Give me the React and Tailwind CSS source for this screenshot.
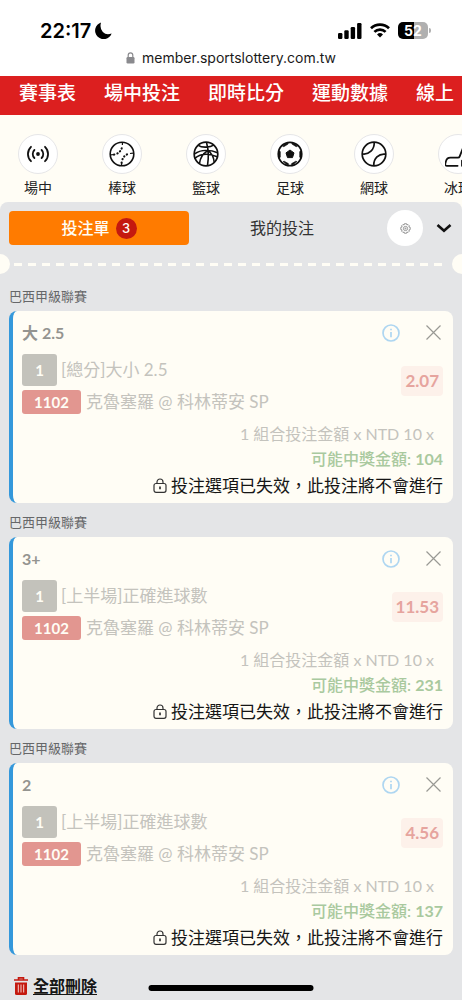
import React, { useState } from "react";

const NAV = ["賽事表", "場中投注", "即時比分", "運動數據", "線上"];

const BETS = [
  { id: "a", pick: "大 2.5", market: "[總分]大小 2.5", odds: "2.07", win: 104 },
  { id: "b", pick: "3+", market: "[上半場]正確進球數", odds: "11.53", win: 231 },
  { id: "c", pick: "2", market: "[上半場]正確進球數", odds: "4.56", win: 137 },
];

function LiveIcon() {
  return (
    <svg viewBox="0 0 26 26" className="size-[26px]" fill="none" stroke="#111" strokeWidth="1.8" strokeLinecap="round" aria-hidden="true">
      <circle cx="13" cy="13" r="1.9" fill="#111" stroke="none" />
      <path d="M9.400 9a5.600 5.600 0 0 0 0 8M16.600 9a5.600 5.600 0 0 1 0 8M6 5.800a10 10 0 0 0 0 14.400M20 5.800a10 10 0 0 1 0 14.400" />
    </svg>
  );
}

function BaseballIcon() {
  return (
    <svg viewBox="0 0 26 26" className="size-[26px]" fill="none" stroke="#111" aria-hidden="true">
      <circle cx="13" cy="13" r="11.8" strokeWidth="1.6" />
      <path d="M5 13.600Q12.500 12 13.400 4.200M12.600 21.800Q13.500 14 21 12.400" strokeWidth="2.100" strokeLinecap="round" strokeDasharray="0.300 3.100" />
      <path d="M2 13.800l3-.3M21 12.500l3-.3M13.400 4V1.500M12.600 22v2.500" strokeWidth="1.200" />
    </svg>
  );
}

function BasketballIcon() {
  return (
    <svg viewBox="0 0 26 26" className="size-[26px]" fill="none" stroke="#111" strokeWidth="1.6" aria-hidden="true">
      <circle cx="13" cy="13" r="11.8" strokeWidth="1.7" />
      <path d="M13.500 1.400c2.200 7.500 2.200 15.500 1 23.200M1.600 12.800C8 8.600 17 8.600 24.600 11.800M5.400 4.400c3.500 2.600 11.500 2.200 15.700-.6M1.600 17.600c5.600-4.800 14-5.400 22.600-1.800M15 9.600c-5 2.800-8 7.600-8.600 13.200M15.200 9.600c3.400 2.600 5.600 6.500 6 11.600" />
    </svg>
  );
}

function SoccerIcon() {
  return (
    <svg viewBox="0 0 26 26" className="size-[26px]" fill="none" stroke="#111" aria-hidden="true">
      <circle cx="13" cy="13" r="11.7" strokeWidth="1.8" />
      <path d="M13 9l4 2.900-1.500 4.700h-5L9 11.900z" fill="#111" strokeWidth="1" strokeLinejoin="round" />
      <path
        d="M5.600 5.200l2.600-2.400 2.600-.8.400 1-4.400 2.700zM20.400 5.200l-2.600-2.400-2.600-.8-.4 1 4.400 2.700zM1.600 9.400l1.700 1.200v5.600l-1.500 1.200zM24.400 9.400l-1.700 1.200v5.600l1.500 1.200zM6 20.600l1.200-.4 4.200 2.400v2.200zM20 20.600l-1.200-.4-4.200 2.400v2.200z"
        fill="#111"
        strokeWidth=".6"
        strokeLinejoin="round"
      />
    </svg>
  );
}

function TennisIcon() {
  return (
    <svg viewBox="0 0 26 26" className="size-[26px]" fill="none" stroke="#111" strokeWidth="1.7" aria-hidden="true">
      <circle cx="13" cy="13" r="11.8" />
      <path d="M1.600 13C8 13.800 13.600 8.600 13.200 1.400M12.800 24.600c-.4-7 5-12.200 11.600-11.400" />
    </svg>
  );
}

function HockeyIcon() {
  return (
    <svg viewBox="0 0 26 26" className="size-[26px]" fill="none" stroke="#111" strokeWidth="1.8" strokeLinejoin="round" strokeLinecap="round" aria-hidden="true">
      <path d="M18 7l-3.400 8.600q-.4 1-1.600 1H5.400Q1.800 16.600.9 20.400L.3 22.600q-.4 2.200 1.600 2.200H12.600" />
      <path d="M17 19.600h9v5.200h-9z" fill="#111" />
    </svg>
  );
}

const SPORTS = [
  ["場中", LiveIcon],
  ["棒球", BaseballIcon],
  ["籃球", BasketballIcon],
  ["足球", SoccerIcon],
  ["網球", TennisIcon],
  ["冰球", HockeyIcon],
];

function StatusBar() {
  return (
    <div className="bg-white font-['Inter',sans-serif] text-black">
      <div className="flex h-[46px] items-end justify-between pr-[31px] pl-10">
        <div className="flex h-[31px] items-center gap-1">
          <span className="text-[20px] leading-6 font-semibold">22:17</span>
          <svg viewBox="0 0 18 18" className="size-[17px]" aria-hidden="true">
            <path d="M6.400.6A9 9 0 1 0 17.600 12.200Q12 14.400 8.300 10.600 4.600 6.400 6.400.6z" />
          </svg>
        </div>
        <div className="flex h-[31px] items-center gap-2">
          <svg viewBox="0 0 24 16" className="h-4 w-6" aria-hidden="true">
            <rect x="0" y="10" width="4.400" height="6" rx="1.200" />
            <rect x="6.300" y="7.200" width="4.400" height="8.800" rx="1.200" />
            <rect x="12.700" y="4" width="4.400" height="12" rx="1.200" />
            <rect x="19.100" y="0" width="4.400" height="16" rx="1.200" />
          </svg>
          <svg viewBox="0 0 20 15" className="h-[15px] w-5" fill="none" stroke="#000" strokeWidth="2.700" aria-hidden="true">
            <path d="M1 5.200a13 13 0 0 1 18 0M4.400 8.900a8 8 0 0 1 11.200 0" />
            <path d="M10 14.600l-3-3.200a4.300 4.300 0 0 1 6 0z" fill="#000" stroke="none" />
          </svg>
          <div className="flex items-center gap-px">
            <div className="flex h-[17px] w-[30px] items-center justify-center rounded-[5px] bg-linear-to-r from-black from-52% to-[#b0b0b0] to-52% text-[14px] leading-4 font-bold text-white">
              52
            </div>
            <span className="h-[5px] w-0.5 rounded-r bg-[#b0b0b0]" />
          </div>
        </div>
      </div>
      <div className="flex h-[30px] items-center justify-center gap-[7px] pb-1.5">
        <svg viewBox="0 0 9 12" className="h-3 w-[9px]" aria-hidden="true">
          <rect x="0.500" y="5" width="8" height="6.500" rx="1.200" fill="#8a8a8e" />
          <path d="M2.200 5.500V3.200a2.300 2.300 0 0 1 4.600 0v2.300" fill="none" stroke="#8a8a8e" strokeWidth="1.200" />
        </svg>
        <span className="text-[14px] leading-5 text-[#1a1a1a]">member.sportslottery.com.tw</span>
      </div>
    </div>
  );
}

function BetCard({ bet, onRemove }) {
  return (
    <section>
      <h2 className="flex h-[34px] items-center pt-1 text-[13px] leading-5 text-[#666769]">巴西甲級聯賽</h2>
      <article className="flex h-[192px] flex-col rounded-lg border-l-4 border-[#3498db] bg-[#fffdf5] pr-2.5 pl-[9px]">
        <div className="flex h-[43px] items-center justify-between">
          <h3 className="text-[16px] leading-6 font-bold text-[#949490]">{bet.pick}</h3>
          <div className="flex items-center gap-[26px]">
            <button type="button" aria-label="資訊">
              <svg viewBox="0 0 18 18" className="size-[18px]" fill="none" stroke="#aed6f1" strokeWidth="1.700" aria-hidden="true">
                <circle cx="9" cy="9" r="8" />
                <path d="M9 8v5.200M9 4.700v1.500" />
              </svg>
            </button>
            <button type="button" aria-label="移除" onClick={onRemove} className="pr-0.5">
              <svg viewBox="0 0 15 15" className="size-[15px]" fill="none" stroke="#999994" strokeWidth="1.200" aria-hidden="true">
                <path d="M.5.5l14 14M14.500.5l-14 14" />
              </svg>
            </button>
          </div>
        </div>
        <div className="flex items-start justify-between text-[16px] leading-6 text-[#c4c3bd]">
          <div className="flex flex-col gap-1">
            <div className="flex items-center gap-1">
              <span className="flex h-8 w-[35px] items-center justify-center rounded-[3px] bg-[#c3c2bb] text-[15px] font-bold text-[#fffdf5]">1</span>
              <span className="text-[17px]">{bet.market}</span>
            </div>
            <div className="flex items-center gap-[5px]">
              <span className="flex h-6 w-[59px] items-center justify-center rounded-[3px] bg-[#e29690] text-[15px] font-bold text-[#fffdf5]">1102</span>
              <span className="text-[17px]">克魯塞羅 @ 科林蒂安 SP</span>
            </div>
          </div>
          <span className="mt-3 flex h-[30px] items-center rounded bg-[#fdf1ea] px-1 text-[17px] font-bold text-[#e6a49e]">{bet.odds}</span>
        </div>
        <div className="mt-[7px] flex flex-col items-end text-[16px] leading-6">
          <p className="pr-[9px] leading-[26px] text-[#c4c3bd]">1 組合投注金額 x NTD 10 x</p>
          <p className="font-medium text-[#a9c99e]">
            可能中獎金額: <strong className="font-bold">{bet.win}</strong>
          </p>
          <p className="flex items-center gap-1 pt-[3px] text-[17px] text-[#151515]">
            <svg viewBox="0 0 14 16" className="h-4 w-[14px]" fill="none" stroke="#333" strokeWidth="1.200" aria-hidden="true">
              <rect x="1" y="5.500" width="12" height="8.800" rx="2" />
              <path d="M4 5.500V4a3 3 0 0 1 6 0v1.500" />
              <path d="M7 8.600v2.600" strokeWidth="1.700" />
            </svg>
            投注選項已失效，此投注將不會進行
          </p>
        </div>
      </article>
    </section>
  );
}

export default function App() {
  const [bets, setBets] = useState(BETS);
  return (
    <div className="relative min-h-screen w-full overflow-hidden bg-[#fffdf5] font-['Lato','Noto_Sans_CJK_TC',sans-serif]">
      <StatusBar />
      <nav className="flex h-[39px] items-center gap-7 overflow-hidden bg-[#dc1f1f] pb-1.5 pl-[19px] text-[19px] leading-7 font-medium whitespace-nowrap text-white">
        {NAV.map((n) => (
          <a key={n} href="#" className="shrink-0">{n}</a>
        ))}
      </nav>
      <div className="flex h-[87px] gap-11 overflow-hidden pt-[19px] pl-[18px]">
        {SPORTS.map(([name, Icon]) => (
          <a key={name} href="#" className="flex w-10 shrink-0 flex-col items-center gap-1 text-[14px] leading-5 whitespace-nowrap text-[#222]">
            <span className="flex size-10 items-center justify-center rounded-full border border-[#e6e6e8] bg-white">
              <Icon />
            </span>
            {name}
          </a>
        ))}
      </div>
      <main className="rounded-t-lg bg-[#e4e5e7]">
        <div className="flex h-[52px] items-center pr-2.5 pl-[9px]">
          <button type="button" className="flex h-[34px] w-[180px] items-center justify-center gap-1.5 rounded bg-[#ff7b00] text-[16px] font-medium text-[#fffdf5]">
            投注單
            <span className="flex size-[21px] items-center justify-center rounded-full bg-[#c4190f] font-['Inter',sans-serif] text-[13px] leading-4">{bets.length}</span>
          </button>
          <button type="button" className="flex-1 pr-3 text-center text-[16px] text-[#333]">我的投注</button>
          <button type="button" aria-label="設定" className="flex size-9 items-center justify-center rounded-full bg-white">
            <svg viewBox="0 0 24 24" className="size-[11px]" fill="none" stroke="#777" strokeWidth="1.600" strokeLinejoin="round" aria-hidden="true">
              <path d="M9.700 1.500h4.600l.8 3 2.300-1.400 3.200 3.200-1.400 2.400 3.100.9v4.700l-3.100.9 1.400 2.400-3.200 3.200-2.300-1.400-.8 3H9.700l-.8-3-2.400 1.400-3.200-3.200 1.500-2.400-3.100-.9V9.600l3.100-.9-1.500-2.400 3.200-3.200 2.400 1.400z" />
              <circle cx="12" cy="12" r="4.600" />
              <circle cx="12" cy="12" r="1.200" />
            </svg>
          </button>
          <button type="button" aria-label="收合" className="ml-[13px]">
            <svg viewBox="0 0 16 10" className="h-2.5 w-4" fill="none" stroke="#111" strokeWidth="2.600" aria-hidden="true">
              <path d="M1.500 2L8 7.800 14.500 2" />
            </svg>
          </button>
        </div>
        <div className="flex h-5 items-center justify-between gap-1">
          <span className="h-5 w-2.5 rounded-r-full bg-[#fffdf5]" />
          <span className="h-[3px] flex-1 bg-[repeating-linear-gradient(90deg,#fffdf5_0_8px,transparent_8px_14px)]" />
          <span className="h-5 w-2.5 rounded-l-full bg-[#fffdf5]" />
        </div>
        <div className="px-[9px] pt-[3px]">
          {bets.map((b) => (
            <BetCard key={b.id} bet={b} onRemove={() => setBets(bets.filter((x) => x.id !== b.id))} />
          ))}
        </div>
        <footer className="flex h-[45px] items-center px-3.5 pt-4">
          <button type="button" onClick={() => setBets([])} className="flex items-center gap-[5px] text-[16px] leading-6 font-bold text-[#151515]">
            <svg viewBox="0 0 14 18" className="h-[18px] w-[14px]" fill="none" aria-hidden="true">
              <path d="M0 3h14M4.500 2.800V.9h5v1.900" stroke="#c4190f" strokeWidth="1.600" />
              <path d="M1 5.400h12V16.500a1.500 1.500 0 0 1-1.500 1.500H2.500a1.500 1.500 0 0 1-1.500-1.500z" fill="#c4190f" />
              <path d="M4.300 7.500v8M7 7.500v8M9.700 7.500v8" stroke="#f3d0cd" strokeWidth="1" />
            </svg>
            <span className="underline underline-offset-2">全部刪除</span>
          </button>
        </footer>
      </main>
      <div className="fixed bottom-[9px] left-1/2 h-1.5 w-[165px] -translate-x-1/2 rounded-full bg-black" />
    </div>
  );
}
